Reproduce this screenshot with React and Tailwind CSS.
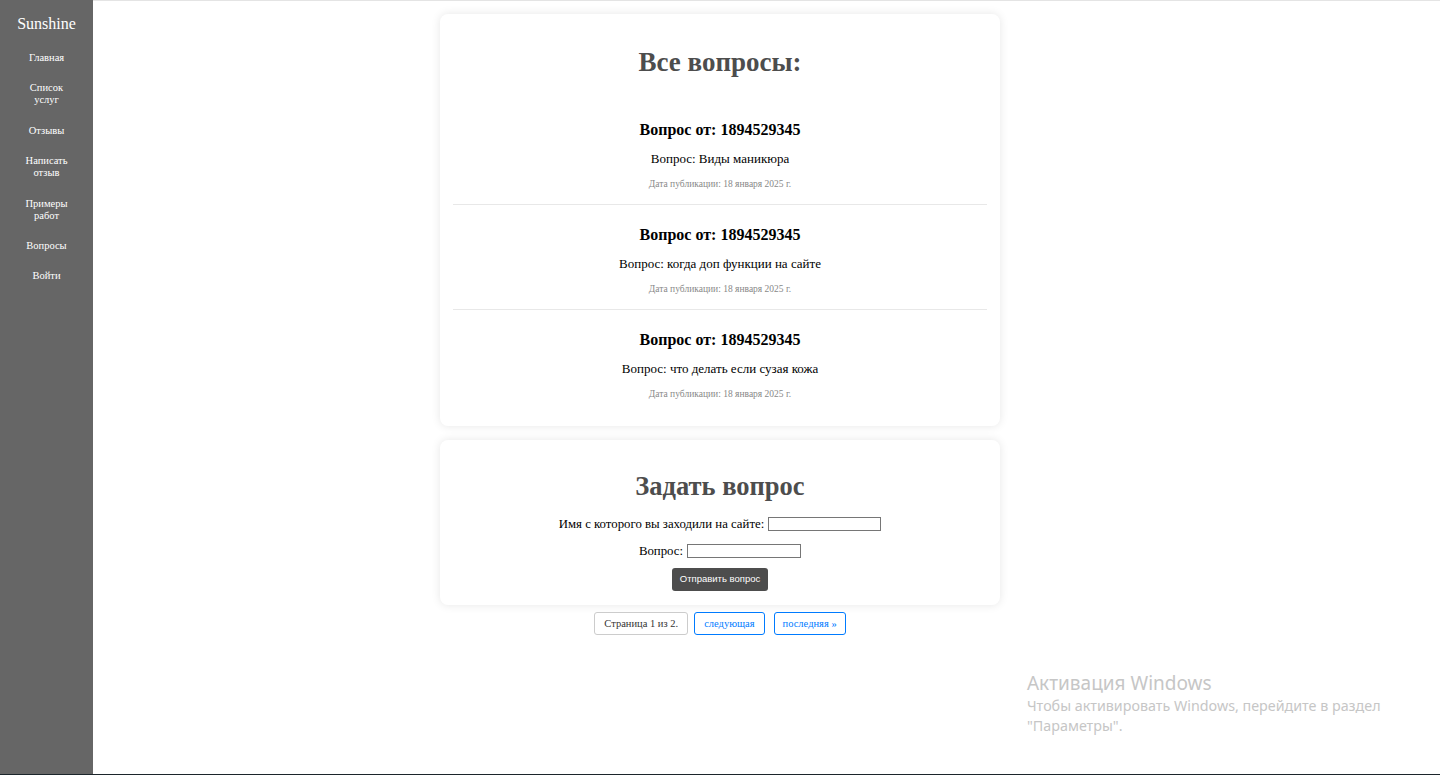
const navItems = [
  ["Главная"],
  ["Список", "услуг"],
  ["Отзывы"],
  ["Написать", "отзыв"],
  ["Примеры", "работ"],
  ["Вопросы"],
  ["Войти"],
];

const questions = [
  "Виды маникюра",
  "когда доп функции на сайте",
  "что делать если сузая кожа",
];

const Sidebar = () => (
  <aside className="w-[93px] shrink-0 bg-[#666666] flex flex-col items-center text-white pt-[14px]">
    <div className="text-[16px] leading-[20px] mb-[18px]">Sunshine</div>
    <nav className="flex flex-col items-center gap-[18.4px]">
      {navItems.map((lines) => (
        <a key={lines.join(" ")} className="text-[10.5px] leading-[12px] text-center">
          {lines.map((l, i) => (
            <div key={i}>{l}</div>
          ))}
        </a>
      ))}
    </nav>
  </aside>
);

const Question = ({ text, last }) => (
  <div className={"flex flex-col items-center pt-[19px] " + (last ? "pb-[14px]" : "pb-[13.75px] border-b border-[#e8e8e8]")}>
    <h3 className="text-[16px] leading-[22px] font-bold text-black">Вопрос от: 1894529345</h3>
    <p className="mt-[9px] text-[13px] leading-[18px] text-black">Вопрос: {text}</p>
    <p className="mt-[10px] text-[9.5px] leading-[12px] text-[#888888]">Дата публикации: 18 января 2025 г.</p>
  </div>
);

export default function App() {
  return (
    <div className="relative h-screen overflow-hidden bg-white flex flex-col font-['Liberation_Serif',serif]">
      <div className="flex flex-1 min-h-0">
        <Sidebar />
        <main className="flex-1 pr-[93px] border-t border-[#e4e4e4] flex flex-col items-center pt-[13px]">
          {/* all questions */}
          <section className="w-[560px] bg-white rounded-lg shadow-[0_0_10px_rgba(0,0,0,0.1)] px-[13px] pt-[30px] pb-[12.5px]">
            <h1 className="text-center text-[27px] leading-[36px] font-bold text-[#4d4d4d] mb-[20px]">Все вопросы:</h1>
            {questions.map((q, i) => (
              <Question key={q} text={q} last={i === questions.length - 1} />
            ))}
          </section>

          {/* ask form */}
          <section className="mt-[14px] w-[560px] bg-white rounded-lg shadow-[0_0_10px_rgba(0,0,0,0.1)] pt-[28px] pb-[14px] flex flex-col items-center">
            <h2 className="text-[26.5px] leading-[36px] font-bold text-[#4d4d4d]">Задать вопрос</h2>
            <label className="mt-[11px] flex items-center gap-[4px] text-[12.8px] leading-[18px] text-black">
              Имя с которого вы заходили на сайте:
              <input className="w-[113px] h-[14px] border border-[#767676] bg-white" />
            </label>
            <label className="mt-[9px] flex items-center gap-[4px] text-[12.8px] leading-[18px] text-black">
              Вопрос:
              <input className="w-[114px] h-[14px] border border-[#767676] bg-white" />
            </label>
            <button className="mt-[8px] h-[23px] px-[8px] rounded-[3px] bg-[#4d4d4d] text-white text-[9.5px] font-['Liberation_Sans',sans-serif]">
              Отправить вопрос
            </button>
          </section>

          {/* pagination */}
          <div className="mt-[7px] flex items-center text-[10.5px]">
            <span className="h-[23px] px-[9px] flex items-center border border-[#cccccc] rounded-[3px] text-[#333333]">Страница 1 из 2.</span>
            <a className="ml-[6px] h-[23px] px-[9px] flex items-center border border-[#007bff] rounded-[3px] text-[#007bff]">следующая</a>
            <a className="ml-[9px] h-[23px] px-[8px] flex items-center border border-[#007bff] rounded-[3px] text-[#007bff]">последняя »</a>
          </div>
        </main>
      </div>
      <div className="h-px bg-[#1c252b]" />

      {/* OS watermark overlay */}
      <div className="absolute left-[1027px] top-[670px] text-[#c6c6c6] font-['Noto_Sans',sans-serif] pointer-events-none">
        <div className="text-[19px] leading-[26px]">Активация Windows</div>
        <div className="text-[14.3px] leading-[20px]">Чтобы активировать Windows, перейдите в раздел</div>
        <div className="text-[14.3px] leading-[20px]">"Параметры".</div>
      </div>
    </div>
  );
}
